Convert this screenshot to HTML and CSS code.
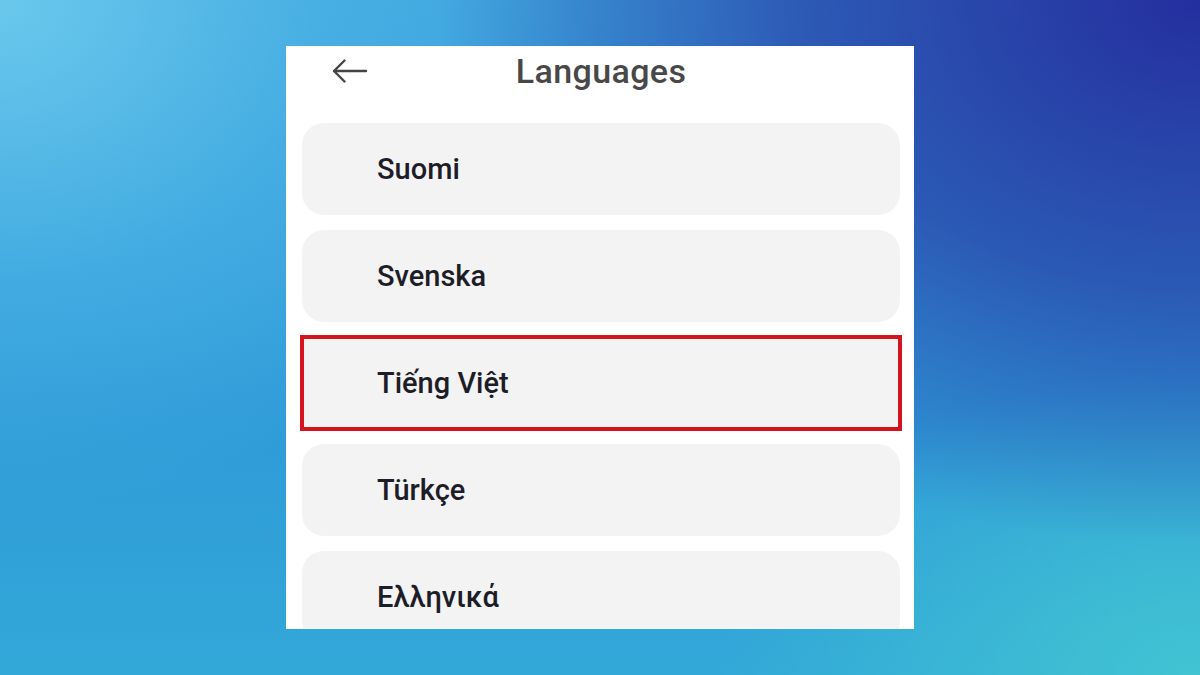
FILE: index.html
```html
<!DOCTYPE html>
<html lang="en">
<head>
<meta charset="utf-8">
<title>Languages</title>
<link rel="stylesheet" href="styles.css">
</head>
<body>
<div class="panel">
  <div class="header">
    <svg class="back" width="36" height="24" viewBox="0 0 36 24" aria-hidden="true">
      <path d="M2 12 H34 M12.5 1.5 L2 12 L12.5 22.5" fill="none" stroke="#444" stroke-width="2.4" stroke-linecap="round" stroke-linejoin="round"/>
    </svg>
    <div class="title">Languages</div>
  </div>
  <div class="list">
    <div class="item">Suomi</div>
    <div class="item">Svenska</div>
    <div class="item selected">Tiếng Việt</div>
    <div class="item">Türkçe</div>
    <div class="item">Ελληνικά</div>
  </div>
</div>
</body>
</html>
```

FILE: styles.css
```css
html, body {
  margin: 0;
  padding: 0;
  height: 100%;
}
body {
  width: 1200px;
  height: 675px;
  overflow: hidden;
  font-family: Roboto, "Noto Sans", "Liberation Sans", sans-serif;
  background:
    radial-gradient(ellipse 75% 95% at 100% 0%, rgba(36, 46, 158, 1) 0%, rgba(38, 60, 165, 0.7) 45%, rgba(40, 80, 175, 0) 85%),
    radial-gradient(ellipse 50% 75% at 0% 0%, rgba(106, 200, 236, 1) 0%, rgba(80, 185, 232, 0.5) 55%, rgba(80, 185, 232, 0) 100%),
    radial-gradient(ellipse 40% 45% at 100% 100%, rgba(66, 196, 210, 1) 0%, rgba(66, 196, 210, 0) 100%),
    linear-gradient(180deg, #3ea4de 0%, #2f9ad8 60%, #32a8d8 100%);
  display: flex;
  justify-content: center;
  align-items: flex-start;
  padding-top: 46px;
  box-sizing: border-box;
}
.panel {
  width: 628px;
  height: 583px;
  background: #ffffff;
  overflow: hidden;
  display: flex;
  flex-direction: column;
}
.header {
  position: relative;
  height: 50px;
  display: flex;
  align-items: center;
  justify-content: center;
  flex-shrink: 0;
}
.back {
  position: absolute;
  left: 46px;
  top: 13px;
}
.title {
  font-size: 34px;
  font-weight: 500;
  color: #484848;
  letter-spacing: 0.4px;
  margin-left: 2px;
}
.list {
  margin-top: 27px;
  padding: 0 14px 0 16px;
  display: flex;
  flex-direction: column;
  gap: 15px;
}
.item {
  height: 92px;
  flex-shrink: 0;
  background: #f3f3f3;
  border-radius: 22px;
  display: flex;
  align-items: center;
  padding-left: 75px;
  font-size: 29px;
  font-weight: 500;
  color: #1d1d27;
}
.item.selected {
  border-radius: 0;
  outline: 4px solid #d3141e;
  outline-offset: -2px;
}
```
